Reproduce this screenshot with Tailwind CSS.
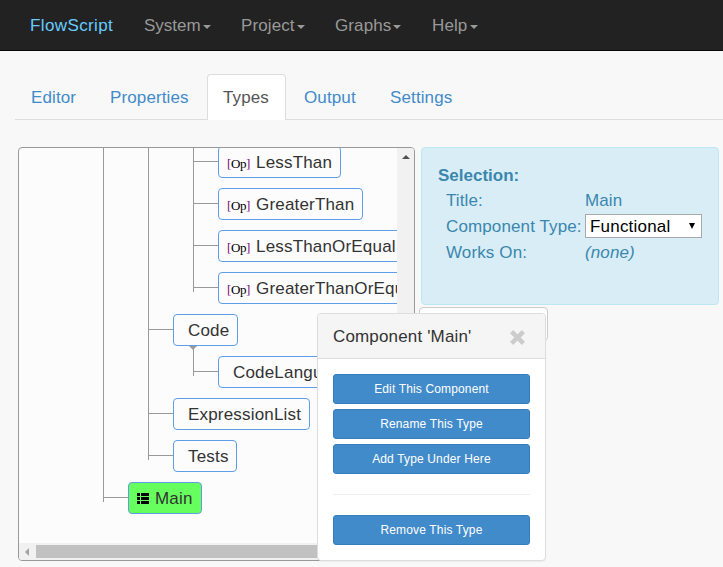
<!DOCTYPE html>
<html lang="en">
<head>
<meta charset="utf-8">
<title>FlowScript</title>
<script src="https://cdn.jsdelivr.net/npm/@tailwindcss/browser@4"></script>
</head>
<body class="w-[723px] h-[567px] overflow-hidden bg-[#f8f8f8] font-['Liberation_Sans',Arial,sans-serif] text-[17px] leading-6 text-[#333] tracking-[0.12px] relative">

<nav class="h-[51px] bg-[#222] border-b border-[#080808] flex items-center pt-[2px] pl-[30px] text-[#999] whitespace-nowrap">
  <a class="w-[114px] text-[#66ccff] tracking-[0.38px]">FlowScript</a>
  <a class="w-[97px] flex items-center tracking-[0px]">System<i class="ml-[2px] mt-[2px] border-x-4 border-x-transparent border-t-4 border-t-[#999]"></i></a>
  <a class="w-[94px] flex items-center tracking-[0.1px]">Project<i class="ml-[2px] mt-[2px] border-x-4 border-x-transparent border-t-4 border-t-[#999]"></i></a>
  <a class="w-[97px] flex items-center">Graphs<i class="ml-[2px] mt-[2px] border-x-4 border-x-transparent border-t-4 border-t-[#999]"></i></a>
  <a class="flex items-center">Help<i class="ml-[3px] mt-[2px] border-x-4 border-x-transparent border-t-4 border-t-[#999]"></i></a>
</nav>

<div class="mt-[23px] ml-[15px] h-[46px] border-b border-[#ddd] flex text-[#428bca] leading-[24px] whitespace-nowrap">
  <a class="w-[79px] pl-4 pt-3">Editor</a>
  <a class="w-[113px] pl-4 pt-3">Properties</a>
  <a class="w-[79px] h-[46px] pl-[15px] pt-[11px] bg-white border border-b-0 border-[#ddd] rounded-t-[4px] text-[#555]">Types</a>
  <a class="w-[87px] pl-[18px] pt-3">Output</a>
  <a class="pl-[17px] pt-3">Settings</a>
</div>

<main class="flex items-start pl-[18px] pt-[27px]">
  <section class="w-[397px] h-[414px] shrink-0 border border-[#999] rounded-[4px] bg-[#fcfcfc] overflow-hidden grid grid-cols-[378px_17px] grid-rows-[395px_17px]">
    <div class="overflow-hidden whitespace-nowrap leading-[32px] tracking-[0.18px]">
      <ul class="relative ml-[84px] -mt-[2px]">
        <i class="absolute left-0 top-0 w-px h-[356px] bg-[#999]"></i>
        <li>
          <ul class="relative ml-[45px]">
            <i class="absolute left-0 top-0 w-px h-[314px] bg-[#999]"></i>
            <li>
              <ul class="relative ml-[45px]">
                <i class="absolute left-0 top-0 w-px h-[146px] bg-[#999]"></i>
                <li class="h-[42px] flex items-start"><i class="w-[25px] shrink-0 h-px mt-[15px] bg-[#999]"></i><span class="h-8 w-[123px] shrink-0 flex border border-[#5e9ee6] rounded-[4px] bg-[#fcfcfc] pl-2"><b class="w-[29px] font-normal font-['Liberation_Serif',serif] text-[13px] text-black tracking-[-0.4px] pt-px"><span class="text-[#800080]">[</span>Op<span class="text-[#800080]">]</span></b>LessThan</span></li>
                <li class="h-[42px] flex items-start"><i class="w-[25px] shrink-0 h-px mt-[15px] bg-[#999]"></i><span class="h-8 w-[145px] shrink-0 flex border border-[#5e9ee6] rounded-[4px] bg-[#fcfcfc] pl-2"><b class="w-[29px] font-normal font-['Liberation_Serif',serif] text-[13px] text-black tracking-[-0.4px] pt-px"><span class="text-[#800080]">[</span>Op<span class="text-[#800080]">]</span></b>GreaterThan</span></li>
                <li class="h-[42px] flex items-start"><i class="w-[25px] shrink-0 h-px mt-[15px] bg-[#999]"></i><span class="h-8 w-[188px] shrink-0 flex border border-[#5e9ee6] rounded-[4px] bg-[#fcfcfc] pl-2"><b class="w-[29px] font-normal font-['Liberation_Serif',serif] text-[13px] text-black tracking-[-0.4px] pt-px"><span class="text-[#800080]">[</span>Op<span class="text-[#800080]">]</span></b>LessThanOrEqual</span></li>
                <li class="h-[42px] flex items-start"><i class="w-[25px] shrink-0 h-px mt-[15px] bg-[#999]"></i><span class="h-8 w-[210px] shrink-0 flex border border-[#5e9ee6] rounded-[4px] bg-[#fcfcfc] pl-2"><b class="w-[29px] font-normal font-['Liberation_Serif',serif] text-[13px] text-black tracking-[-0.4px] pt-px"><span class="text-[#800080]">[</span>Op<span class="text-[#800080]">]</span></b>GreaterThanOrEqual</span></li>
              </ul>
            </li>
            <li>
              <div class="h-[42px] flex items-start"><i class="w-[25px] h-px mt-[15px] bg-[#999]"></i><span class="h-8 w-[65px] border border-[#5e9ee6] rounded-[4px] bg-[#fcfcfc] pl-[14px]">Code</span></div>
              <ul class="relative ml-[45px]">
                <i class="absolute left-0 -top-[10px] w-px h-[30px] bg-[#999]"></i>
                <i class="absolute -left-[4px] -top-[10px] border-x-[4.5px] border-x-transparent border-t-[4px] border-t-[#999]"></i>
                <li class="h-[42px] flex items-start"><i class="w-[25px] shrink-0 h-px mt-[15px] bg-[#999]"></i><span class="h-8 w-[142px] shrink-0 border border-[#5e9ee6] rounded-[4px] bg-[#fcfcfc] pl-[14px]">CodeLanguage</span></li>
              </ul>
            </li>
            <li class="h-[42px] flex items-start"><i class="w-[25px] h-px mt-[15px] bg-[#999]"></i><span class="h-8 w-[137px] border border-[#5e9ee6] rounded-[4px] bg-[#fcfcfc] pl-[14px]">ExpressionList</span></li>
            <li class="h-[42px] flex items-start"><i class="w-[25px] h-px mt-[15px] bg-[#999]"></i><span class="h-8 w-[64px] border border-[#5e9ee6] rounded-[4px] bg-[#fcfcfc] pl-[14px]">Tests</span></li>
          </ul>
        </li>
        <li class="h-[42px] flex items-start"><i class="w-[25px] h-px mt-[15px] bg-[#999]"></i><span class="h-8 w-[74px] flex items-start border border-[#5e9ee6] rounded-[4px] bg-[#66ff5e] pl-2"><svg class="w-3 h-[11px] mr-[6px] mt-[10px]" viewBox="0 0 12 11" shape-rendering="crispEdges"><path d="M0 0h3v3H0zM4 0h8v3H4zM0 4h3v3H0zM4 4h8v3H4zM0 8h3v3H0zM4 8h8v3H4z"/></svg>Main</span></li>
      </ul>
    </div>
    <div class="bg-[#f1f1f1] flex justify-center pt-[7px]"><i class="h-0 border-x-4 border-x-transparent border-b-4 border-b-[#505050]"></i></div>
    <div class="bg-[#f1f1f1] flex items-center"><i class="ml-[6px] border-y-4 border-y-transparent border-r-4 border-r-[#a3a3a3]"></i><i class="ml-[7px] w-[320px] h-[13px] bg-[#c1c1c1]"></i></div>
    <div class="bg-[#dcdcdc]"></div>
  </section>

  <aside class="ml-1">
    <section class="ml-[2px] w-[298px] h-[158px] border border-[#bce8f1] rounded-[4px] bg-[#d9edf7] text-[#3a87ad] pt-[15px] pl-4 whitespace-nowrap">
      <h2 class="h-6 pt-px font-bold tracking-[0px]">Selection:</h2>
      <div class="ml-2 grid grid-cols-[139px_117px] auto-rows-[26px] leading-[28px]">
        <span>Title:</span><span>Main</span>
        <span>Component Type:</span>
        <span class="h-6 mt-px flex items-center justify-between border border-[#a9a9a9] bg-white text-black pl-1 pr-[6px] leading-[24px] tracking-[0.2px]"><span class="pt-px">Functional</span><i class="border-x-[3px] border-x-transparent border-t-[6px] border-t-black"></i></span>
        <span>Works On:</span><em>(none)</em>
      </div>
    </section>
    <div class="mt-[2px] w-[129px] h-[34px] bg-white border border-[#ccc] rounded-[4px]"></div>
  </aside>
</main>

<section class="absolute left-[317px] top-[313px] w-[229px] h-[248px] bg-white border border-[#ddd] rounded-[4px] shadow-[0_1px_1px_rgba(0,0,0,0.05)] overflow-hidden">
  <header class="h-[45px] bg-[#f5f5f5] border-b border-[#ddd] flex items-center justify-between pl-[15px] pr-[20px]">
    <h3 class="pt-[2px] tracking-[0.16px]">Component 'Main'</h3>
    <svg class="w-[15px] h-[15px] mt-[2px]" viewBox="0 0 15 15"><path d="M1.6 1.6 13.4 13.4M13.4 1.6 1.6 13.4" stroke="#ccc" stroke-width="4.4"/></svg>
  </header>
  <div class="px-[15px] pt-[15px] flex flex-col gap-[5px] text-[12px] text-white tracking-[0.15px]">
    <button class="h-[30px] bg-[#428bca] border border-[#357ebd] rounded-[3px]">Edit This Component</button>
    <button class="h-[30px] bg-[#428bca] border border-[#357ebd] rounded-[3px]">Rename This Type</button>
    <button class="h-[30px] bg-[#428bca] border border-[#357ebd] rounded-[3px]">Add Type Under Here</button>
    <hr class="mt-[15px] mb-[15px] border-[#eee]">
    <button class="h-[30px] bg-[#428bca] border border-[#357ebd] rounded-[3px]">Remove This Type</button>
  </div>
</section>
</body>
</html>
